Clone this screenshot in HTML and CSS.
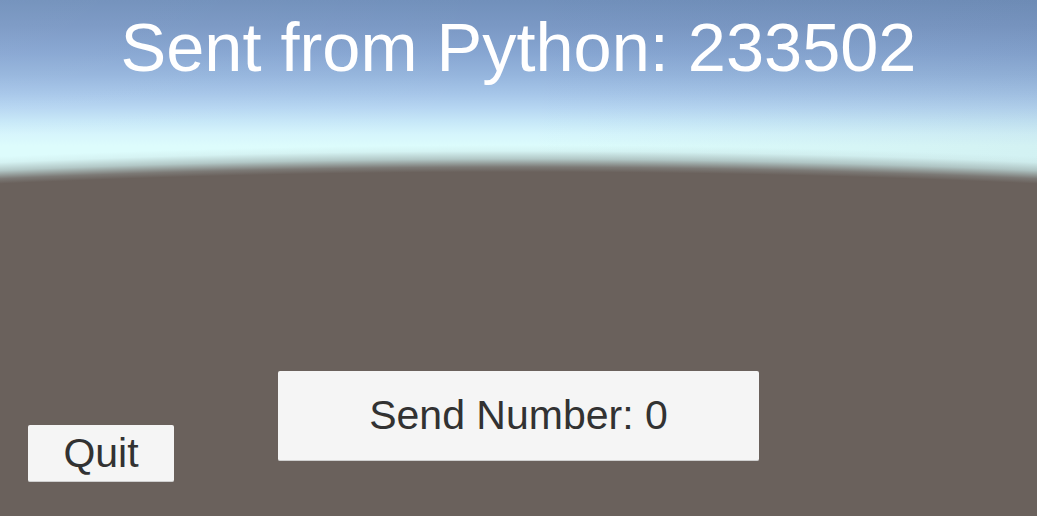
FILE: index.html
```html
<!DOCTYPE html>
<html>
<head>
<meta charset="utf-8">
<link rel="stylesheet" href="styles.css">
</head>
<body>
<div class="scene">
  <h1 class="title">Sent from Python: 233502</h1>
  <div class="controls">
    <button class="btn quit">Quit</button>
    <button class="btn send">Send Number: 0</button>
  </div>
</div>
</body>
</html>
```
FILE: styles.css
```css
html, body {
  margin: 0;
  padding: 0;
  width: 1037px;
  height: 516px;
  overflow: hidden;
}
.scene {
  width: 1037px;
  height: 516px;
  display: flex;
  flex-direction: column;
  justify-content: space-between;
  font-family: "Liberation Sans", Arial, sans-serif;
  background:
    radial-gradient(ellipse 3400px 1000px at 50% 1168px,
      #6a615c 0%,
      #6a615c 99.6%,
      rgba(114, 108, 104, 0.9) 100.1%,
      rgba(150, 165, 163, 0.6) 100.9%,
      rgba(190, 215, 215, 0.25) 101.7%,
      rgba(220, 252, 252, 0) 102.3%),
    linear-gradient(to right,
      rgba(255, 255, 255, 0.04) 0%,
      rgba(255, 255, 255, 0) 50%,
      rgba(40, 50, 70, 0.05) 100%),
    linear-gradient(to bottom,
      #7190bb 0px,
      #7a98c4 25px,
      #86a5d1 52px,
      #95b5dd 75px,
      #a6c6e9 94px,
      #b6d6f2 108px,
      #c7e8f8 122px,
      #d5f5fc 134px,
      #dcfcfc 146px,
      #dcfcfc 516px);
}
.title {
  margin: 0;
  padding-top: 10px;
  text-align: center;
  font-weight: normal;
  font-size: 68.5px;
  line-height: 76px;
  color: #ffffff;
}
.controls {
  display: flex;
  align-items: flex-end;
}
.btn {
  font-family: "Liberation Sans", Arial, sans-serif;
  background: #f5f5f5;
  color: #323232;
  border: none;
  border-bottom: 1px solid #cfcfcf;
  border-radius: 2px;
  padding: 0;
  font-size: 41px;
  box-sizing: border-box;
}
.quit {
  width: 146px;
  height: 57px;
  margin: 0 0 34px 28px;
}
.send {
  width: 481px;
  height: 90px;
  margin: 0 0 55px 104px;
}
```
